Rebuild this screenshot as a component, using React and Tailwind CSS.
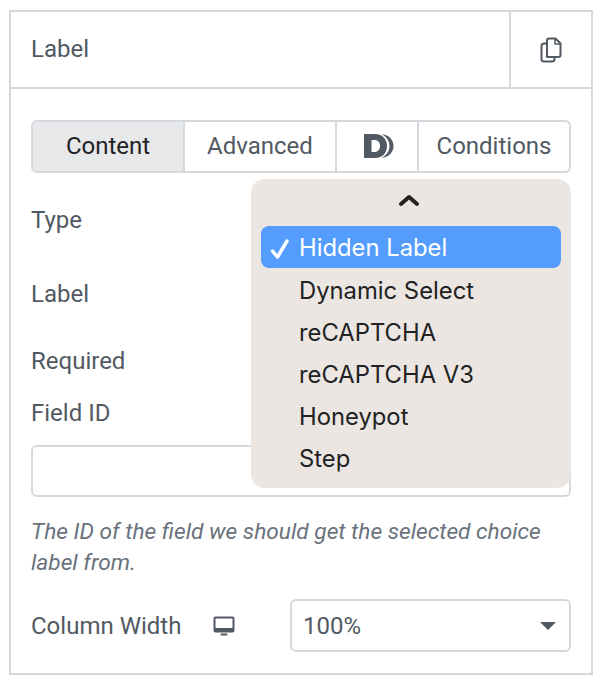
import React from "react";

const tabBase = "flex items-center justify-center h-full pb-[1px] text-[24px] text-[#515962]";
const opts = ["Dynamic Select", "reCAPTCHA", "reCAPTCHA V3", "Honeypot", "Step"];

export default function App() {
  return (
    <div className="w-[603px] h-[684px] bg-white pt-[10px] pl-[9px] font-['Roboto',sans-serif]">
      <div className="relative w-[584px] h-[665px] border-2 border-[#d5d8dc] flex flex-col">
        <div className="flex h-[77px] border-b-2 border-[#d5d8dc] shrink-0">
          <div className="flex-1 flex items-center pl-[20px] pb-[2px] text-[24px] text-[#515962]">Label</div>
          <div className="w-[82px] border-l-2 border-[#d5d8dc] flex items-center justify-center">
            <svg width="22" height="26" viewBox="0 0 22 26" fill="none" stroke="#515962" strokeWidth="2" strokeLinejoin="round" strokeLinecap="round">
              <path d="M7 20V3.500A2 2 0 0 1 9 1.500h6.500L20.500 6.500V18a2 2 0 0 1-2 2H7z" />
              <path d="M15 2v5h5.500" strokeWidth="1.500" />
              <path d="M7 6.500H4A2.500 2.500 0 0 0 1.500 9v13A2.500 2.500 0 0 0 4 24.500h8A2.500 2.500 0 0 0 14.500 22v-2" />
            </svg>
          </div>
        </div>

        <div className="flex-1 px-[20px] pt-[31px] flex flex-col">
          <div className="flex h-[53px] w-[540px] border-2 border-[#d5d8dc] rounded-[6px] overflow-hidden shrink-0">
            <div className={`${tabBase} w-[152px] bg-[#e6e8ea] !text-[#1f2124] border-r-2 border-[#d5d8dc]`}>Content</div>
            <div className={`${tabBase} w-[152px] border-r-2 border-[#d5d8dc]`}>Advanced</div>
            <div className={`${tabBase} w-[82px] border-r-2 border-[#d5d8dc]`}>
              <svg className="ml-[4px]" width="32" height="26" viewBox="0 0 32 26">
                <path fillRule="evenodd" fill="#515962" d="M1 1h11c7.500 0 12 5 12 12s-4.500 12-12 12H1zM8.500 7v12h3c3.500 0 5.500-2.500 5.500-6s-2-6-5.500-6z" />
                <path fill="#515962" d="M18 1c7.500 0.500 12.500 5.500 12.500 12S25.500 24.500 18 25c5-2 8.500-6.500 8.500-12S23 3 18 1z" />
              </svg>
            </div>
            <div className={`${tabBase} flex-1`}>Conditions</div>
          </div>

          <div className="h-[46px] mt-[24px] flex items-center text-[24px] text-[#515962] shrink-0">Type</div>
          <div className="h-[46px] mt-[28px] flex items-center text-[24px] text-[#515962] shrink-0">Label</div>
          <div className="h-[30px] mt-[29px] flex items-center text-[24px] text-[#515962] shrink-0">Required</div>
          <div className="h-[30px] mt-[22px] flex items-center text-[24px] text-[#515962] shrink-0">Field ID</div>
          <div className="h-[52px] mt-[17px] border-2 border-[#d5d8dc] rounded-[6px] shrink-0" />

          <p className="mt-[19px] text-[22.700px] leading-[31px] italic text-[#69727d]">
            The ID of the field we should get the selected choice<br />label from.
          </p>

          <div className="flex items-center mt-[21px] h-[53px]">
            <span className="w-[181px] text-[24px] text-[#515962]">Column Width</span>
            <svg width="24" height="22" viewBox="0 0 24 22" fill="#515962">
              <path fillRule="evenodd" d="M3.500 1.500h17A2 2 0 0 1 22.500 3.500v12a2 2 0 0 1-2 2h-17a2 2 0 0 1-2-2v-12a2 2 0 0 1 2-2zM3.500 3.500v9.500h17V3.500z" />
              <rect x="8.500" y="18.500" width="7" height="2" rx="1" />
            </svg>
            <div className="ml-[54px] w-[281px] h-[53px] border-2 border-[#d5d8dc] rounded-[6px] flex items-center justify-between pl-[11px] pr-[13px] text-[24px] text-[#515962]">
              <span>100%</span>
              <span className="w-0 h-0 border-x-[8px] border-x-transparent border-t-[8px] border-t-[#515962]" />
            </div>
          </div>
        </div>

        <div className="absolute left-[240px] top-[167px] w-[320px] h-[309px] bg-[#ebe6e2] rounded-[14px] px-[10px] font-['Inter',sans-serif] text-[23.800px] text-[#222]">
          <div className="h-[47px] flex justify-center pt-[14px] pr-[5px]">
            <svg width="22" height="14" viewBox="0 0 22 14" fill="none" stroke="#222" strokeWidth="4" strokeLinecap="round" strokeLinejoin="round">
              <path d="M3 11L11 4L19 11" />
            </svg>
          </div>
          <div className="relative h-[42px] bg-[#559cff] rounded-[8px] flex items-center pl-[38px] pt-[2px] text-white">
            <svg className="absolute left-[9px] top-[12px]" width="20" height="22" viewBox="0 0 20 22" fill="none" stroke="#fff" strokeWidth="3.500" strokeLinecap="round" strokeLinejoin="round">
              <path d="M2.500 13L7.500 19L17 3" />
            </svg>
            Hidden Label
          </div>
          {opts.map((o) => (
            <div key={o} className="h-[42px] flex items-center pl-[38px] pt-[3px]">{o}</div>
          ))}
        </div>
      </div>
    </div>
  );
}
